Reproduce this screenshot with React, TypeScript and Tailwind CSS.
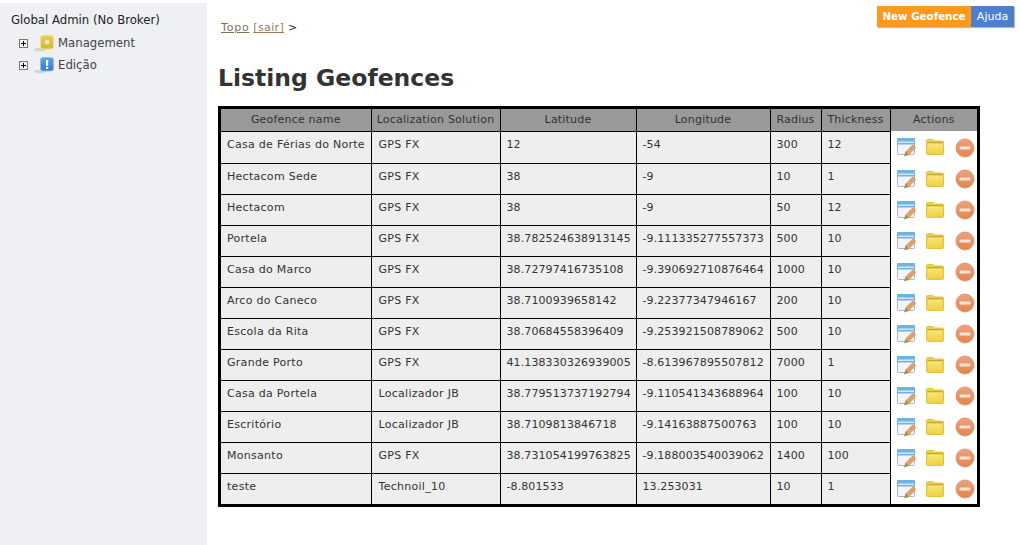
import React from 'react';

const rows = [
  ['Casa de Férias do Norte', 'GPS FX', '12', '-54', '300', '12'],
  ['Hectacom Sede', 'GPS FX', '38', '-9', '10', '1'],
  ['Hectacom', 'GPS FX', '38', '-9', '50', '12'],
  ['Portela', 'GPS FX', '38.782524638913145', '-9.111335277557373', '500', '10'],
  ['Casa do Marco', 'GPS FX', '38.72797416735108', '-9.390692710876464', '1000', '10'],
  ['Arco do Caneco', 'GPS FX', '38.7100939658142', '-9.22377347946167', '200', '10'],
  ['Escola da Rita', 'GPS FX', '38.70684558396409', '-9.253921508789062', '500', '10'],
  ['Grande Porto', 'GPS FX', '41.138330326939005', '-8.613967895507812', '7000', '1'],
  ['Casa da Portela', 'Localizador JB', '38.779513737192794', '-9.110541343688964', '100', '10'],
  ['Escritório', 'Localizador JB', '38.7109813846718', '-9.14163887500763', '100', '10'],
  ['Monsanto', 'GPS FX', '38.731054199763825', '-9.188003540039062', '1400', '100'],
  ['teste', 'Technoil_10', '-8.801533', '13.253031', '10', '1'],
];

const headers = ['Geofence name', 'Localization Solution', 'Latitude', 'Longitude', 'Radius', 'Thickness', 'Actions'];

const EditIcon = () => (
  <svg width="20" height="20" viewBox="0 0 20 20" className="shrink-0">
    <rect x="1.5" y="1.5" width="17" height="16" rx="1" fill="#f4f5fb" stroke="#aab4d4" />
    <rect x="1" y="1" width="18" height="6.5" rx="1" fill="#6cb4e4" />
    <rect x="2" y="4.5" width="16" height="1.5" fill="#cfe8f8" />
    <path d="M9.5 15 L16 8.5 Q17.5 7.5 19 9 Q20 10.5 19 11.5 L12.5 18 Z" fill="#dfa06a" stroke="#c79262" strokeWidth="0.5" />
    <path d="M8 19.5 L9.5 14.5 L13 18 Z" fill="#9c9a3a" />
  </svg>
);

const FolderIcon = () => (
  <svg width="18" height="16" viewBox="0 0 18 16" className="shrink-0">
    <defs>
      <linearGradient id="fd" x1="0" y1="0" x2="0" y2="1">
        <stop offset="0" stopColor="#f8e676" />
        <stop offset="1" stopColor="#efd04a" />
      </linearGradient>
    </defs>
    <path d="M0.5 1.5 Q0.5 0.5 1.5 0.5 H7 L8 2 H16.5 Q17.5 2 17.5 3 V14.5 Q17.5 15.5 16.5 15.5 H1.5 Q0.5 15.5 0.5 14.5 Z" fill="#ecd040" stroke="#e2c63c" />
    <rect x="1.5" y="3" width="15" height="1.5" fill="#bfa93e" />
    <rect x="1.5" y="4.5" width="15" height="10" fill="url(#fd)" />
  </svg>
);

const RemoveIcon = () => (
  <svg width="20" height="20" viewBox="0 0 20 20" className="shrink-0">
    <defs>
      <linearGradient id="rm" x1="0" y1="0" x2="0" y2="1">
        <stop offset="0" stopColor="#eda27c" />
        <stop offset="1" stopColor="#e5844c" />
      </linearGradient>
    </defs>
    <circle cx="10" cy="10" r="9" fill="url(#rm)" stroke="#dc9a78" />
    <rect x="4.5" y="8.5" width="11" height="3" rx="1.2" fill="#f9e6da" />
  </svg>
);

const NodeIcon = ({ blue }: { blue?: boolean }) => (
  <svg width="20" height="18" viewBox="0 0 20 18" className="shrink-0">
    <defs>
      <linearGradient id="ny" x1="0" y1="0" x2="0" y2="1">
        <stop offset="0" stopColor="#e6cc62" />
        <stop offset="1" stopColor="#d9b535" />
      </linearGradient>
      <linearGradient id="nb" x1="0" y1="0" x2="0" y2="1">
        <stop offset="0" stopColor="#5aa5e6" />
        <stop offset="1" stopColor="#3a78c4" />
      </linearGradient>
    </defs>
    <ellipse cx="6" cy="15.5" rx="6" ry="1.7" fill="#d2d2d2" />
    <rect x="6.5" y="1.5" width="13" height="13.5" rx="2.5" fill={blue ? 'url(#nb)' : 'url(#ny)'} stroke={blue ? '#8cc0ec' : '#f5e27c'} />
    {blue ? (
      <path d="M12 4 h2.2 v6 h-2.2 z M12 11 h2.2 v2 h-2.2 z" fill="#fff" />
    ) : (
      <circle cx="13" cy="8.2" r="2.3" fill="#f6ecc0" />
    )}
  </svg>
);

const Expander = () => (
  <span className="flex w-[9px] h-[9px] items-center justify-center border border-[#777] bg-[#f4f4f0] relative">
    <span className="absolute w-[5px] h-px bg-black" />
    <span className="absolute w-px h-[5px] bg-black" />
  </span>
);

export default function App() {
  return (
    <div className="flex w-[1021px] h-[545px] bg-white overflow-hidden text-[11px] leading-[14px] text-[#333] font-['DejaVu_Sans',Verdana,sans-serif]">
      <aside className="w-[207px] mt-[3px] bg-[#eff0f4] pl-[11px] pt-[10px] text-[11.7px] shrink-0">
        <div className="h-[15px] leading-[15px] text-[#222]">Global Admin (No Broker)</div>
        <div className="mt-[7px] flex flex-col gap-[6px] pl-[8px] text-[#444]">
          <div className="flex items-center h-[16px]">
            <Expander />
            <span className="ml-[6px] mr-[4px] flex"><NodeIcon /></span>
            <span>Management</span>
          </div>
          <div className="flex items-center h-[16px]">
            <Expander />
            <span className="ml-[6px] mr-[4px] flex"><NodeIcon blue /></span>
            <span>Edição</span>
          </div>
        </div>
      </aside>
      <main className="flex-1 relative pl-[11px]">
        <div className="absolute right-[7px] top-[6px] flex text-white shadow-[1px_1px_1px_#bbb]">
          <span className="bg-[#ff9a1e] w-[94px] h-[21px] leading-[21px] text-center font-bold text-[10.3px]">New Geofence</span>
          <span className="bg-[#4d7fca] w-[43px] h-[21px] leading-[21px] text-center">Ajuda</span>
        </div>
        <div className="mt-[21px] ml-[3px] h-[14px] text-[#222] tracking-[0.35px]">
          <a className="underline text-[#80705f] tracking-[0.8px]">Topo</a>{' '}
          <a className="underline text-[#9a7a5a]">[sair]</a> &gt;
        </div>
        <h1 className="mt-[27px] text-[23.5px] leading-[32px] font-bold text-[#333]">Listing Geofences</h1>
        <div className="mt-[12px] w-[762px] border-[3px] border-black">
          <table className="table-fixed border-collapse w-[756px]">
            <colgroup>
              <col className="w-[150px]" />
              <col className="w-[129px]" />
              <col className="w-[136px]" />
              <col className="w-[134px]" />
              <col className="w-[51px]" />
              <col className="w-[69px]" />
              <col className="w-[87px]" />
            </colgroup>
            <thead>
              <tr className="h-[22px]">
                {headers.map((h, i) => (
                  <th
                    key={h}
                    className={`bg-[#999] font-normal text-[#333] p-0 text-center whitespace-nowrap tracking-[0.2px] ${i < 6 ? 'border-r border-b border-black' : ''}`}
                  >
                    {h}
                  </th>
                ))}
              </tr>
            </thead>
            <tbody>
              {rows.map((r, ri) => (
                <tr key={r[0]} className={ri === 0 ? 'h-[32px]' : 'h-[31px]'}>
                  {r.map((c, i) => (
                    <td
                      key={i}
                      className={`bg-[#eee] align-top pt-[6px] pb-0 whitespace-nowrap border-r border-black ${i === 1 ? 'pl-[7px]' : 'pl-[6px]'} ${ri < rows.length - 1 ? 'border-b' : ''} ${i < 2 ? 'tracking-[0.28px]' : 'tracking-[0.1px]'}`}
                    >
                      {c}
                    </td>
                  ))}
                  <td className="bg-white p-0 align-middle">
                    <div className="flex items-center pl-[5px]">
                      <EditIcon />
                      <span className="ml-[10px] flex"><FolderIcon /></span>
                      <span className="ml-[11px] mt-px flex"><RemoveIcon /></span>
                    </div>
                  </td>
                </tr>
              ))}
            </tbody>
          </table>
        </div>
      </main>
    </div>
  );
}
